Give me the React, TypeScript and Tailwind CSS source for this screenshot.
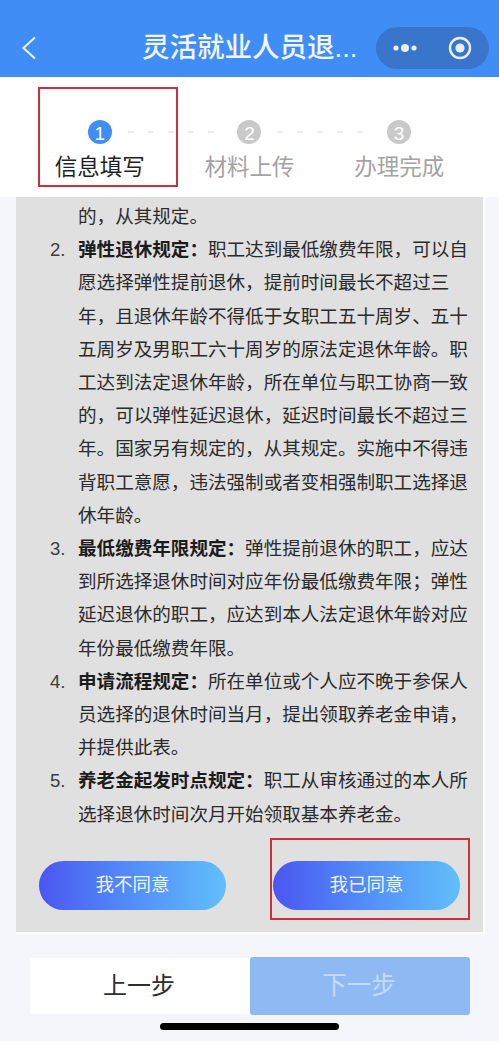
const font = { fontFamily: '"Liberation Sans", "Noto Sans CJK SC", sans-serif' };

const steps = [
  { n: "1", label: "信息填写", active: true },
  { n: "2", label: "材料上传", active: false },
  { n: "3", label: "办理完成", active: false },
];

const items = [
  {
    n: "2.",
    title: "弹性退休规定：",
    text: "职工达到最低缴费年限，可以自愿选择弹性提前退休，提前时间最长不超过三年，且退休年龄不得低于女职工五十周岁、五十五周岁及男职工六十周岁的原法定退休年龄。职工达到法定退休年龄，所在单位与职工协商一致的，可以弹性延迟退休，延迟时间最长不超过三年。国家另有规定的，从其规定。实施中不得违背职工意愿，违法强制或者变相强制职工选择退休年龄。",
  },
  {
    n: "3.",
    title: "最低缴费年限规定：",
    text: "弹性提前退休的职工，应达到所选择退休时间对应年份最低缴费年限；弹性延迟退休的职工，应达到本人法定退休年龄对应年份最低缴费年限。",
  },
  {
    n: "4.",
    title: "申请流程规定：",
    text: "所在单位或个人应不晚于参保人员选择的退休时间当月，提出领取养老金申请，并提供此表。",
  },
  {
    n: "5.",
    title: "养老金起发时点规定：",
    text: "职工从审核通过的本人所选择退休时间次月开始领取基本养老金。",
  },
];

function Dashes() {
  return (
    <div className="absolute left-[calc(50%+28px)] top-[11px] flex w-[86px] justify-between">
      {[0, 1, 2, 3, 4].map((i) => (
        <span key={i} className="h-[2px] w-[6px] bg-[#ececec]" />
      ))}
    </div>
  );
}

export default function App() {
  return (
    <div className="relative flex h-[1041px] w-[499px] flex-col overflow-hidden bg-[#f4f6fb]" style={font}>
      {/* Header */}
      <div className="flex h-[77px] flex-shrink-0 items-end bg-[#418df6] pb-[8px] pl-[21px] pr-[10px]">
        <div className="flex h-[42px] w-[16px] items-center">
          <svg width="15" height="24" viewBox="0 0 15 24" fill="none" stroke="#eaf2fe" strokeWidth="2">
            <path d="M14 1.5 L2.5 12 L14 22.5" />
          </svg>
        </div>
        <div className="ml-[105px] flex h-[42px] w-[214px] items-center text-[27.5px] font-medium whitespace-nowrap text-[#f2f7ff]">
          灵活就业人员退...
        </div>
        <div className="ml-[20px] flex h-[42px] w-[113px] items-center rounded-full bg-[#3a75cc]">
          <svg className="ml-[16px]" width="26" height="10" viewBox="0 0 26 10" fill="#e6effc">
            <circle cx="4" cy="5" r="2.6" />
            <circle cx="13" cy="5" r="4" />
            <circle cx="22" cy="5" r="2.6" />
          </svg>
          <svg className="ml-[30px]" width="24" height="24" viewBox="0 0 24 24" fill="none">
            <circle cx="12" cy="12" r="10" stroke="#e6effc" strokeWidth="2.4" />
            <circle cx="12" cy="12" r="4.6" fill="#e6effc" />
          </svg>
        </div>
      </div>

      {/* Steps */}
      <div className="grid h-[120px] flex-shrink-0 grid-cols-3 bg-white px-[25px] pt-[43px]">
        {steps.map((s, i) => (
          <div key={s.n} className="relative flex flex-col items-center">
            <div
              className={`flex h-[24px] w-[24px] items-center justify-center rounded-full text-[19px] text-white ${
                s.active ? "bg-[#418df6]" : "bg-[#c9c9c9]"
              }`}
            >
              <span className="translate-y-[2px]">{s.n}</span>
            </div>
            <div
              className={`mt-[8px] text-[22.5px] leading-[32px] whitespace-nowrap ${
                s.active ? "text-[#1f1f1f]" : "text-[#a3a3a3]"
              }`}
            >
              {s.label}
            </div>
            {i < 2 && <Dashes />}
          </div>
        ))}
      </div>

      {/* Agreement text */}
      <div className="mx-[16px] flex h-[737px] w-[469px] flex-shrink-0 flex-col border-r-2 border-b-2 border-white bg-[#e0e0e0] pt-[3px]">
        <div className="pr-[14px] pl-[62px] text-[18.57px] leading-[33.2px] text-[#2b2b2b]">
          <p>的，从其规定。</p>
          {items.map((item) => (
            <div key={item.n} className="relative">
              <span className="absolute top-0 left-[-28px] text-[#3d3d3d]">{item.n}</span>
              <p>
                <b className="font-bold text-[#1c1c1c]">{item.title}</b>
                {item.text}
              </p>
            </div>
          ))}
        </div>
        <div className="mt-[30px] flex justify-between pr-[23px] pl-[23px]">
          {["我不同意", "我已同意"].map((label) => (
            <button
              key={label}
              className="flex h-[49px] w-[187px] items-center justify-center rounded-full bg-gradient-to-r from-[#4b55f1] to-[#62bffb] pb-[1px] text-[18.5px] text-[#eef4ff]"
            >
              {label}
            </button>
          ))}
        </div>
      </div>

      {/* Bottom buttons */}
      <div className="mt-[23px] flex items-center pl-[30px]">
        <button className="h-[56px] w-[220px] rounded-l-[2px] bg-white pr-[2px] text-[24px] text-[#2e2e2e]">上一步</button>
        <button className="h-[58px] w-[220px] rounded-[3px] bg-[#8fb9f2] pr-[2px] text-[24.5px] text-[#c4dcfa]">下一步</button>
      </div>

      {/* Home indicator */}
      <div className="absolute top-[1023px] left-[160px] h-[7px] w-[179px] rounded-full bg-black" />

      {/* Annotation boxes */}
      <div className="absolute top-[87px] left-[38px] h-[100px] w-[140px] border-2 border-[#cf2f3c]" />
      <div className="absolute top-[838px] left-[270px] h-[82px] w-[200px] border-2 border-[#cf2f3c]" />
    </div>
  );
}
